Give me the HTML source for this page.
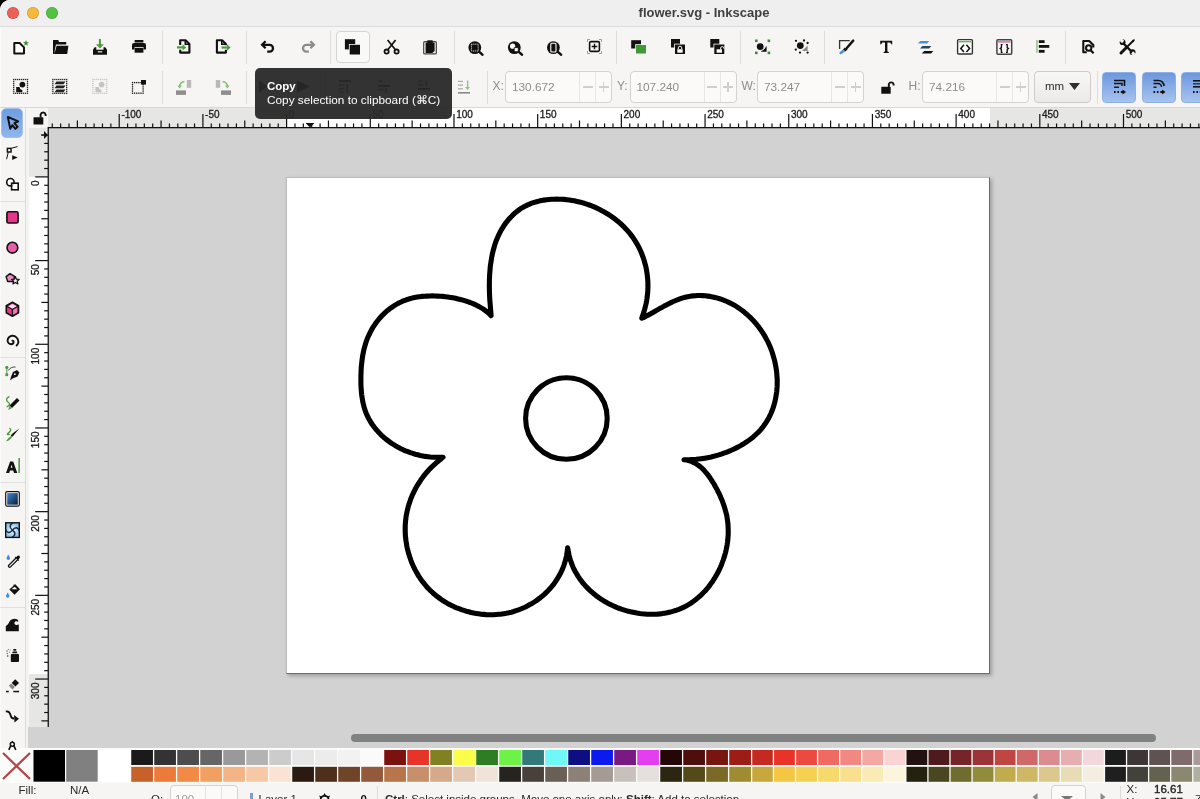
<!DOCTYPE html><html><head><meta charset="utf-8"><style>
*{box-sizing:border-box;margin:0;padding:0}
html,body{width:1200px;height:799px;overflow:hidden;background:#000}
body{font-family:"Liberation Sans",sans-serif;position:relative}
.a{position:absolute}
#win{will-change:transform;position:absolute;left:0;top:0;width:1200px;height:799px;background:#f6f5f4;border-radius:10px 0 0 0;overflow:hidden;box-shadow:inset 1px 1px 0 #fbfbfb}
#title{left:0;top:0;width:1200px;height:27px;background:#efefef;border-bottom:1px solid #dcdcdc}
.tl{width:12px;height:12px;border-radius:50%;top:7.2px;box-shadow:inset 0 0 0 .6px rgba(0,0,0,.18)}
.sep{background:#dedddb;width:1px}
.ic{position:absolute}
.inp{position:absolute;height:32px;border:1px solid #d3d2d0;border-radius:4px;background:#fbfaf9}
.inp span{position:absolute;left:6px;top:7.5px;font-size:11.8px;color:#8d8d8d}
.lbl{position:absolute;font-size:12px;color:#8d8d8d}
</style></head><body><div id="win">
<div class="a" id="title"></div>
<div class="a tl" style="left:7.2px;background:#ee5f57"></div>
<div class="a tl" style="left:26.6px;background:#f6b83b"></div>
<div class="a tl" style="left:45.6px;background:#55c142"></div>
<div class="a" style="left:0;top:5px;width:1408px;text-align:center;font-size:13px;font-weight:bold;color:#404040">flower.svg - Inkscape</div>
<div class="a sep" style="left:161.5px;top:31px;height:33px"></div>
<div class="a sep" style="left:245.5px;top:31px;height:33px"></div>
<div class="a sep" style="left:329.5px;top:31px;height:33px"></div>
<div class="a sep" style="left:453.5px;top:31px;height:33px"></div>
<div class="a sep" style="left:616px;top:31px;height:33px"></div>
<div class="a sep" style="left:740px;top:31px;height:33px"></div>
<div class="a sep" style="left:824px;top:31px;height:33px"></div>
<div class="a sep" style="left:1065px;top:31px;height:33px"></div>
<div class="a sep" style="left:161.5px;top:71px;height:33px"></div>
<div class="a sep" style="left:245.5px;top:71px;height:33px"></div>
<div class="a sep" style="left:487px;top:71px;height:33px"></div>
<div class="a sep" style="left:1096.5px;top:71px;height:33px"></div>
<div class="a" style="left:0;top:107px;width:1200px;height:1px;background:#d8d8d8"></div>
<div class="a" style="left:336px;top:31px;width:34px;height:32px;border:1px solid #d6d5d3;border-radius:4px;background:#f9f9f8"></div>
<div class="lbl" style="left:492.5px;top:79px">X:</div>
<div class="inp" style="left:505px;top:71px;width:107px"><span>130.672</span><div class="a" style="left:73px;top:0;width:1px;height:30px;background:#e6e5e3"></div><div class="a" style="left:89px;top:0;width:1px;height:30px;background:#e6e5e3"></div><div class="a" style="left:76.5px;top:14px;width:10px;height:1.5px;background:#cfcfcf"></div><div class="a" style="left:92.5px;top:14px;width:10px;height:1.5px;background:#cfcfcf"></div><div class="a" style="left:96.7px;top:9.5px;width:1.5px;height:10px;background:#cfcfcf"></div></div>
<div class="lbl" style="left:617px;top:79px">Y:</div>
<div class="inp" style="left:629.5px;top:71px;width:107px"><span>107.240</span><div class="a" style="left:73px;top:0;width:1px;height:30px;background:#e6e5e3"></div><div class="a" style="left:89px;top:0;width:1px;height:30px;background:#e6e5e3"></div><div class="a" style="left:76.5px;top:14px;width:10px;height:1.5px;background:#cfcfcf"></div><div class="a" style="left:92.5px;top:14px;width:10px;height:1.5px;background:#cfcfcf"></div><div class="a" style="left:96.7px;top:9.5px;width:1.5px;height:10px;background:#cfcfcf"></div></div>
<div class="lbl" style="left:741.5px;top:79px">W:</div>
<div class="inp" style="left:757px;top:71px;width:107px"><span>73.247</span><div class="a" style="left:73px;top:0;width:1px;height:30px;background:#e6e5e3"></div><div class="a" style="left:89px;top:0;width:1px;height:30px;background:#e6e5e3"></div><div class="a" style="left:76.5px;top:14px;width:10px;height:1.5px;background:#cfcfcf"></div><div class="a" style="left:92.5px;top:14px;width:10px;height:1.5px;background:#cfcfcf"></div><div class="a" style="left:96.7px;top:9.5px;width:1.5px;height:10px;background:#cfcfcf"></div></div>
<div class="lbl" style="left:908.5px;top:79px">H:</div>
<div class="inp" style="left:922px;top:71px;width:107px"><span>74.216</span><div class="a" style="left:73px;top:0;width:1px;height:30px;background:#e6e5e3"></div><div class="a" style="left:89px;top:0;width:1px;height:30px;background:#e6e5e3"></div><div class="a" style="left:76.5px;top:14px;width:10px;height:1.5px;background:#cfcfcf"></div><div class="a" style="left:92.5px;top:14px;width:10px;height:1.5px;background:#cfcfcf"></div><div class="a" style="left:96.7px;top:9.5px;width:1.5px;height:10px;background:#cfcfcf"></div></div>
<div class="a" style="left:1034px;top:71px;width:57px;height:32px;border:1px solid #cdccca;border-radius:4px;background:linear-gradient(#f7f7f6,#ebeae9)"></div>
<div class="a" style="left:1045px;top:80px;font-size:11.5px;color:#2e2e2e">mm</div>
<svg class="a" style="left:1069px;top:83px" width="11" height="7"><path d="M0 0H11L5.5 7Z" fill="#2e2e2e"/></svg>
<div class="a" style="left:1102px;top:71.5px;width:34px;height:31.5px;border-radius:4px;background:linear-gradient(#6c98de,#a8c3ee);border:1px solid #8fb0e4"></div>
<div class="a" style="left:1141.5px;top:71.5px;width:34px;height:31.5px;border-radius:4px;background:linear-gradient(#6c98de,#a8c3ee);border:1px solid #8fb0e4"></div>
<div class="a" style="left:1181px;top:71.5px;width:34px;height:31.5px;border-radius:4px;background:linear-gradient(#6c98de,#a8c3ee);border:1px solid #8fb0e4"></div>
<div class="a" style="left:25px;top:108px;width:1px;height:640px;background:#dcdcdc"></div>
<div class="a" style="left:1.2px;top:107.6px;width:22px;height:30px;border-radius:5px;background:linear-gradient(#6f9de3,#8fb5ec);border:1px solid #a6c0e8"></div>
<div class="a" style="left:0;top:200.5px;width:25px;height:1px;background:#e0e0e0"></div>
<div class="a" style="left:0;top:357px;width:25px;height:1px;background:#e0e0e0"></div>
<div class="a" style="left:0;top:482px;width:25px;height:1px;background:#e0e0e0"></div>
<div class="a" style="left:0;top:607px;width:25px;height:1px;background:#e0e0e0"></div>
<div class="a" style="left:27.5px;top:108px;width:1172.5px;height:640px;background:#d2d2d2"></div>
<div class="a" style="left:48px;top:108px;width:1152px;height:20px;background:#e6e6e5"></div>
<div class="a" style="left:287px;top:108px;width:703px;height:20px;background:#fff"></div>
<div class="a" style="left:28.5px;top:128px;width:20px;height:599px;background:#e6e6e5"></div>
<div class="a" style="left:28.5px;top:176.9px;width:20px;height:497.5px;background:#fff"></div>
<div class="a" style="left:26px;top:128px;width:2.5px;height:599px;background:#f3f3f2"></div>
<div class="a" style="left:26px;top:108px;width:22px;height:20px;background:#f6f5f4"></div>
<div class="a" style="left:26px;top:727px;width:2px;height:21px;background:#f3f3f2"></div>
<svg class="a" style="left:0;top:0;will-change:transform" width="1200" height="799"><rect x="48" y="127" width="1152" height="1.3" fill="#111"/><rect x="47.6" y="127" width="1.3" height="600" fill="#111"/><rect x="51.67" y="123.5" width="1.2" height="3.5" fill="#111"/><rect x="60.04" y="123.5" width="1.2" height="3.5" fill="#111"/><rect x="68.41" y="123.5" width="1.2" height="3.5" fill="#111"/><rect x="76.78" y="120.5" width="1.2" height="6.5" fill="#111"/><rect x="85.14" y="123.5" width="1.2" height="3.5" fill="#111"/><rect x="93.51" y="123.5" width="1.2" height="3.5" fill="#111"/><rect x="101.88" y="123.5" width="1.2" height="3.5" fill="#111"/><rect x="110.25" y="123.5" width="1.2" height="3.5" fill="#111"/><rect x="118.62" y="114" width="1.2" height="13" fill="#111"/><text x="121.42" y="118.4" font-size="10" fill="#1a1a1a" stroke="#1a1a1a" stroke-width=".3">-100</text><rect x="126.99" y="123.5" width="1.2" height="3.5" fill="#111"/><rect x="135.36" y="123.5" width="1.2" height="3.5" fill="#111"/><rect x="143.73" y="123.5" width="1.2" height="3.5" fill="#111"/><rect x="152.10" y="123.5" width="1.2" height="3.5" fill="#111"/><rect x="160.47" y="120.5" width="1.2" height="6.5" fill="#111"/><rect x="168.83" y="123.5" width="1.2" height="3.5" fill="#111"/><rect x="177.20" y="123.5" width="1.2" height="3.5" fill="#111"/><rect x="185.57" y="123.5" width="1.2" height="3.5" fill="#111"/><rect x="193.94" y="123.5" width="1.2" height="3.5" fill="#111"/><rect x="202.31" y="114" width="1.2" height="13" fill="#111"/><text x="205.11" y="118.4" font-size="10" fill="#1a1a1a" stroke="#1a1a1a" stroke-width=".3">-50</text><rect x="210.68" y="123.5" width="1.2" height="3.5" fill="#111"/><rect x="219.05" y="123.5" width="1.2" height="3.5" fill="#111"/><rect x="227.42" y="123.5" width="1.2" height="3.5" fill="#111"/><rect x="235.79" y="123.5" width="1.2" height="3.5" fill="#111"/><rect x="244.16" y="120.5" width="1.2" height="6.5" fill="#111"/><rect x="252.52" y="123.5" width="1.2" height="3.5" fill="#111"/><rect x="260.89" y="123.5" width="1.2" height="3.5" fill="#111"/><rect x="269.26" y="123.5" width="1.2" height="3.5" fill="#111"/><rect x="277.63" y="123.5" width="1.2" height="3.5" fill="#111"/><rect x="286.00" y="114" width="1.2" height="13" fill="#111"/><text x="288.80" y="118.4" font-size="10" fill="#1a1a1a" stroke="#1a1a1a" stroke-width=".3">0</text><rect x="294.37" y="123.5" width="1.2" height="3.5" fill="#111"/><rect x="302.74" y="123.5" width="1.2" height="3.5" fill="#111"/><rect x="311.11" y="123.5" width="1.2" height="3.5" fill="#111"/><rect x="319.48" y="123.5" width="1.2" height="3.5" fill="#111"/><rect x="327.85" y="120.5" width="1.2" height="6.5" fill="#111"/><rect x="336.21" y="123.5" width="1.2" height="3.5" fill="#111"/><rect x="344.58" y="123.5" width="1.2" height="3.5" fill="#111"/><rect x="352.95" y="123.5" width="1.2" height="3.5" fill="#111"/><rect x="361.32" y="123.5" width="1.2" height="3.5" fill="#111"/><rect x="369.69" y="114" width="1.2" height="13" fill="#111"/><text x="372.49" y="118.4" font-size="10" fill="#1a1a1a" stroke="#1a1a1a" stroke-width=".3">50</text><rect x="378.06" y="123.5" width="1.2" height="3.5" fill="#111"/><rect x="386.43" y="123.5" width="1.2" height="3.5" fill="#111"/><rect x="394.80" y="123.5" width="1.2" height="3.5" fill="#111"/><rect x="403.17" y="123.5" width="1.2" height="3.5" fill="#111"/><rect x="411.53" y="120.5" width="1.2" height="6.5" fill="#111"/><rect x="419.90" y="123.5" width="1.2" height="3.5" fill="#111"/><rect x="428.27" y="123.5" width="1.2" height="3.5" fill="#111"/><rect x="436.64" y="123.5" width="1.2" height="3.5" fill="#111"/><rect x="445.01" y="123.5" width="1.2" height="3.5" fill="#111"/><rect x="453.38" y="114" width="1.2" height="13" fill="#111"/><text x="456.18" y="118.4" font-size="10" fill="#1a1a1a" stroke="#1a1a1a" stroke-width=".3">100</text><rect x="461.75" y="123.5" width="1.2" height="3.5" fill="#111"/><rect x="470.12" y="123.5" width="1.2" height="3.5" fill="#111"/><rect x="478.49" y="123.5" width="1.2" height="3.5" fill="#111"/><rect x="486.86" y="123.5" width="1.2" height="3.5" fill="#111"/><rect x="495.23" y="120.5" width="1.2" height="6.5" fill="#111"/><rect x="503.59" y="123.5" width="1.2" height="3.5" fill="#111"/><rect x="511.96" y="123.5" width="1.2" height="3.5" fill="#111"/><rect x="520.33" y="123.5" width="1.2" height="3.5" fill="#111"/><rect x="528.70" y="123.5" width="1.2" height="3.5" fill="#111"/><rect x="537.07" y="114" width="1.2" height="13" fill="#111"/><text x="539.87" y="118.4" font-size="10" fill="#1a1a1a" stroke="#1a1a1a" stroke-width=".3">150</text><rect x="545.44" y="123.5" width="1.2" height="3.5" fill="#111"/><rect x="553.81" y="123.5" width="1.2" height="3.5" fill="#111"/><rect x="562.18" y="123.5" width="1.2" height="3.5" fill="#111"/><rect x="570.55" y="123.5" width="1.2" height="3.5" fill="#111"/><rect x="578.91" y="120.5" width="1.2" height="6.5" fill="#111"/><rect x="587.28" y="123.5" width="1.2" height="3.5" fill="#111"/><rect x="595.65" y="123.5" width="1.2" height="3.5" fill="#111"/><rect x="604.02" y="123.5" width="1.2" height="3.5" fill="#111"/><rect x="612.39" y="123.5" width="1.2" height="3.5" fill="#111"/><rect x="620.76" y="114" width="1.2" height="13" fill="#111"/><text x="623.56" y="118.4" font-size="10" fill="#1a1a1a" stroke="#1a1a1a" stroke-width=".3">200</text><rect x="629.13" y="123.5" width="1.2" height="3.5" fill="#111"/><rect x="637.50" y="123.5" width="1.2" height="3.5" fill="#111"/><rect x="645.87" y="123.5" width="1.2" height="3.5" fill="#111"/><rect x="654.24" y="123.5" width="1.2" height="3.5" fill="#111"/><rect x="662.61" y="120.5" width="1.2" height="6.5" fill="#111"/><rect x="670.97" y="123.5" width="1.2" height="3.5" fill="#111"/><rect x="679.34" y="123.5" width="1.2" height="3.5" fill="#111"/><rect x="687.71" y="123.5" width="1.2" height="3.5" fill="#111"/><rect x="696.08" y="123.5" width="1.2" height="3.5" fill="#111"/><rect x="704.45" y="114" width="1.2" height="13" fill="#111"/><text x="707.25" y="118.4" font-size="10" fill="#1a1a1a" stroke="#1a1a1a" stroke-width=".3">250</text><rect x="712.82" y="123.5" width="1.2" height="3.5" fill="#111"/><rect x="721.19" y="123.5" width="1.2" height="3.5" fill="#111"/><rect x="729.56" y="123.5" width="1.2" height="3.5" fill="#111"/><rect x="737.93" y="123.5" width="1.2" height="3.5" fill="#111"/><rect x="746.29" y="120.5" width="1.2" height="6.5" fill="#111"/><rect x="754.66" y="123.5" width="1.2" height="3.5" fill="#111"/><rect x="763.03" y="123.5" width="1.2" height="3.5" fill="#111"/><rect x="771.40" y="123.5" width="1.2" height="3.5" fill="#111"/><rect x="779.77" y="123.5" width="1.2" height="3.5" fill="#111"/><rect x="788.14" y="114" width="1.2" height="13" fill="#111"/><text x="790.94" y="118.4" font-size="10" fill="#1a1a1a" stroke="#1a1a1a" stroke-width=".3">300</text><rect x="796.51" y="123.5" width="1.2" height="3.5" fill="#111"/><rect x="804.88" y="123.5" width="1.2" height="3.5" fill="#111"/><rect x="813.25" y="123.5" width="1.2" height="3.5" fill="#111"/><rect x="821.62" y="123.5" width="1.2" height="3.5" fill="#111"/><rect x="829.99" y="120.5" width="1.2" height="6.5" fill="#111"/><rect x="838.35" y="123.5" width="1.2" height="3.5" fill="#111"/><rect x="846.72" y="123.5" width="1.2" height="3.5" fill="#111"/><rect x="855.09" y="123.5" width="1.2" height="3.5" fill="#111"/><rect x="863.46" y="123.5" width="1.2" height="3.5" fill="#111"/><rect x="871.83" y="114" width="1.2" height="13" fill="#111"/><text x="874.63" y="118.4" font-size="10" fill="#1a1a1a" stroke="#1a1a1a" stroke-width=".3">350</text><rect x="880.20" y="123.5" width="1.2" height="3.5" fill="#111"/><rect x="888.57" y="123.5" width="1.2" height="3.5" fill="#111"/><rect x="896.94" y="123.5" width="1.2" height="3.5" fill="#111"/><rect x="905.31" y="123.5" width="1.2" height="3.5" fill="#111"/><rect x="913.67" y="120.5" width="1.2" height="6.5" fill="#111"/><rect x="922.04" y="123.5" width="1.2" height="3.5" fill="#111"/><rect x="930.41" y="123.5" width="1.2" height="3.5" fill="#111"/><rect x="938.78" y="123.5" width="1.2" height="3.5" fill="#111"/><rect x="947.15" y="123.5" width="1.2" height="3.5" fill="#111"/><rect x="955.52" y="114" width="1.2" height="13" fill="#111"/><text x="958.32" y="118.4" font-size="10" fill="#1a1a1a" stroke="#1a1a1a" stroke-width=".3">400</text><rect x="963.89" y="123.5" width="1.2" height="3.5" fill="#111"/><rect x="972.26" y="123.5" width="1.2" height="3.5" fill="#111"/><rect x="980.63" y="123.5" width="1.2" height="3.5" fill="#111"/><rect x="989.00" y="123.5" width="1.2" height="3.5" fill="#111"/><rect x="997.37" y="120.5" width="1.2" height="6.5" fill="#111"/><rect x="1005.73" y="123.5" width="1.2" height="3.5" fill="#111"/><rect x="1014.10" y="123.5" width="1.2" height="3.5" fill="#111"/><rect x="1022.47" y="123.5" width="1.2" height="3.5" fill="#111"/><rect x="1030.84" y="123.5" width="1.2" height="3.5" fill="#111"/><rect x="1039.21" y="114" width="1.2" height="13" fill="#111"/><text x="1042.01" y="118.4" font-size="10" fill="#1a1a1a" stroke="#1a1a1a" stroke-width=".3">450</text><rect x="1047.58" y="123.5" width="1.2" height="3.5" fill="#111"/><rect x="1055.95" y="123.5" width="1.2" height="3.5" fill="#111"/><rect x="1064.32" y="123.5" width="1.2" height="3.5" fill="#111"/><rect x="1072.69" y="123.5" width="1.2" height="3.5" fill="#111"/><rect x="1081.06" y="120.5" width="1.2" height="6.5" fill="#111"/><rect x="1089.42" y="123.5" width="1.2" height="3.5" fill="#111"/><rect x="1097.79" y="123.5" width="1.2" height="3.5" fill="#111"/><rect x="1106.16" y="123.5" width="1.2" height="3.5" fill="#111"/><rect x="1114.53" y="123.5" width="1.2" height="3.5" fill="#111"/><rect x="1122.90" y="114" width="1.2" height="13" fill="#111"/><text x="1125.70" y="118.4" font-size="10" fill="#1a1a1a" stroke="#1a1a1a" stroke-width=".3">500</text><rect x="1131.27" y="123.5" width="1.2" height="3.5" fill="#111"/><rect x="1139.64" y="123.5" width="1.2" height="3.5" fill="#111"/><rect x="1148.01" y="123.5" width="1.2" height="3.5" fill="#111"/><rect x="1156.38" y="123.5" width="1.2" height="3.5" fill="#111"/><rect x="1164.75" y="120.5" width="1.2" height="6.5" fill="#111"/><rect x="1173.11" y="123.5" width="1.2" height="3.5" fill="#111"/><rect x="1181.48" y="123.5" width="1.2" height="3.5" fill="#111"/><rect x="1189.85" y="123.5" width="1.2" height="3.5" fill="#111"/><rect x="1198.22" y="123.5" width="1.2" height="3.5" fill="#111"/><rect x="41.4" y="134.46" width="6.600000000000001" height="1.2" fill="#111"/><rect x="44.2" y="142.82" width="3.799999999999997" height="1.2" fill="#111"/><rect x="44.2" y="151.19" width="3.799999999999997" height="1.2" fill="#111"/><rect x="44.2" y="159.56" width="3.799999999999997" height="1.2" fill="#111"/><rect x="44.2" y="167.93" width="3.799999999999997" height="1.2" fill="#111"/><rect x="35.2" y="176.30" width="12.799999999999997" height="1.2" fill="#111"/><text transform="translate(38.8 180.40) rotate(-90)" text-anchor="end" font-size="10" fill="#1a1a1a" stroke="#1a1a1a" stroke-width=".3">0</text><rect x="44.2" y="184.67" width="3.799999999999997" height="1.2" fill="#111"/><rect x="44.2" y="193.04" width="3.799999999999997" height="1.2" fill="#111"/><rect x="44.2" y="201.41" width="3.799999999999997" height="1.2" fill="#111"/><rect x="44.2" y="209.78" width="3.799999999999997" height="1.2" fill="#111"/><rect x="41.4" y="218.15" width="6.600000000000001" height="1.2" fill="#111"/><rect x="44.2" y="226.51" width="3.799999999999997" height="1.2" fill="#111"/><rect x="44.2" y="234.88" width="3.799999999999997" height="1.2" fill="#111"/><rect x="44.2" y="243.25" width="3.799999999999997" height="1.2" fill="#111"/><rect x="44.2" y="251.62" width="3.799999999999997" height="1.2" fill="#111"/><rect x="35.2" y="259.99" width="12.799999999999997" height="1.2" fill="#111"/><text transform="translate(38.8 264.09) rotate(-90)" text-anchor="end" font-size="10" fill="#1a1a1a" stroke="#1a1a1a" stroke-width=".3">50</text><rect x="44.2" y="268.36" width="3.799999999999997" height="1.2" fill="#111"/><rect x="44.2" y="276.73" width="3.799999999999997" height="1.2" fill="#111"/><rect x="44.2" y="285.10" width="3.799999999999997" height="1.2" fill="#111"/><rect x="44.2" y="293.47" width="3.799999999999997" height="1.2" fill="#111"/><rect x="41.4" y="301.83" width="6.600000000000001" height="1.2" fill="#111"/><rect x="44.2" y="310.20" width="3.799999999999997" height="1.2" fill="#111"/><rect x="44.2" y="318.57" width="3.799999999999997" height="1.2" fill="#111"/><rect x="44.2" y="326.94" width="3.799999999999997" height="1.2" fill="#111"/><rect x="44.2" y="335.31" width="3.799999999999997" height="1.2" fill="#111"/><rect x="35.2" y="343.68" width="12.799999999999997" height="1.2" fill="#111"/><text transform="translate(38.8 347.78) rotate(-90)" text-anchor="end" font-size="10" fill="#1a1a1a" stroke="#1a1a1a" stroke-width=".3">100</text><rect x="44.2" y="352.05" width="3.799999999999997" height="1.2" fill="#111"/><rect x="44.2" y="360.42" width="3.799999999999997" height="1.2" fill="#111"/><rect x="44.2" y="368.79" width="3.799999999999997" height="1.2" fill="#111"/><rect x="44.2" y="377.16" width="3.799999999999997" height="1.2" fill="#111"/><rect x="41.4" y="385.52" width="6.600000000000001" height="1.2" fill="#111"/><rect x="44.2" y="393.89" width="3.799999999999997" height="1.2" fill="#111"/><rect x="44.2" y="402.26" width="3.799999999999997" height="1.2" fill="#111"/><rect x="44.2" y="410.63" width="3.799999999999997" height="1.2" fill="#111"/><rect x="44.2" y="419.00" width="3.799999999999997" height="1.2" fill="#111"/><rect x="35.2" y="427.37" width="12.799999999999997" height="1.2" fill="#111"/><text transform="translate(38.8 431.47) rotate(-90)" text-anchor="end" font-size="10" fill="#1a1a1a" stroke="#1a1a1a" stroke-width=".3">150</text><rect x="44.2" y="435.74" width="3.799999999999997" height="1.2" fill="#111"/><rect x="44.2" y="444.11" width="3.799999999999997" height="1.2" fill="#111"/><rect x="44.2" y="452.48" width="3.799999999999997" height="1.2" fill="#111"/><rect x="44.2" y="460.85" width="3.799999999999997" height="1.2" fill="#111"/><rect x="41.4" y="469.21" width="6.600000000000001" height="1.2" fill="#111"/><rect x="44.2" y="477.58" width="3.799999999999997" height="1.2" fill="#111"/><rect x="44.2" y="485.95" width="3.799999999999997" height="1.2" fill="#111"/><rect x="44.2" y="494.32" width="3.799999999999997" height="1.2" fill="#111"/><rect x="44.2" y="502.69" width="3.799999999999997" height="1.2" fill="#111"/><rect x="35.2" y="511.06" width="12.799999999999997" height="1.2" fill="#111"/><text transform="translate(38.8 515.16) rotate(-90)" text-anchor="end" font-size="10" fill="#1a1a1a" stroke="#1a1a1a" stroke-width=".3">200</text><rect x="44.2" y="519.43" width="3.799999999999997" height="1.2" fill="#111"/><rect x="44.2" y="527.80" width="3.799999999999997" height="1.2" fill="#111"/><rect x="44.2" y="536.17" width="3.799999999999997" height="1.2" fill="#111"/><rect x="44.2" y="544.54" width="3.799999999999997" height="1.2" fill="#111"/><rect x="41.4" y="552.90" width="6.600000000000001" height="1.2" fill="#111"/><rect x="44.2" y="561.27" width="3.799999999999997" height="1.2" fill="#111"/><rect x="44.2" y="569.64" width="3.799999999999997" height="1.2" fill="#111"/><rect x="44.2" y="578.01" width="3.799999999999997" height="1.2" fill="#111"/><rect x="44.2" y="586.38" width="3.799999999999997" height="1.2" fill="#111"/><rect x="35.2" y="594.75" width="12.799999999999997" height="1.2" fill="#111"/><text transform="translate(38.8 598.85) rotate(-90)" text-anchor="end" font-size="10" fill="#1a1a1a" stroke="#1a1a1a" stroke-width=".3">250</text><rect x="44.2" y="603.12" width="3.799999999999997" height="1.2" fill="#111"/><rect x="44.2" y="611.49" width="3.799999999999997" height="1.2" fill="#111"/><rect x="44.2" y="619.86" width="3.799999999999997" height="1.2" fill="#111"/><rect x="44.2" y="628.23" width="3.799999999999997" height="1.2" fill="#111"/><rect x="41.4" y="636.59" width="6.600000000000001" height="1.2" fill="#111"/><rect x="44.2" y="644.96" width="3.799999999999997" height="1.2" fill="#111"/><rect x="44.2" y="653.33" width="3.799999999999997" height="1.2" fill="#111"/><rect x="44.2" y="661.70" width="3.799999999999997" height="1.2" fill="#111"/><rect x="44.2" y="670.07" width="3.799999999999997" height="1.2" fill="#111"/><rect x="35.2" y="678.44" width="12.799999999999997" height="1.2" fill="#111"/><text transform="translate(38.8 682.54) rotate(-90)" text-anchor="end" font-size="10" fill="#1a1a1a" stroke="#1a1a1a" stroke-width=".3">300</text><rect x="44.2" y="686.81" width="3.799999999999997" height="1.2" fill="#111"/><rect x="44.2" y="695.18" width="3.799999999999997" height="1.2" fill="#111"/><rect x="44.2" y="703.55" width="3.799999999999997" height="1.2" fill="#111"/><rect x="44.2" y="711.92" width="3.799999999999997" height="1.2" fill="#111"/><rect x="41.4" y="720.28" width="6.600000000000001" height="1.2" fill="#111"/><path d="M305.5 123H314.5L310 127.5Z" fill="#111"/><path d="M44 131L48 135L44 139Z M41 134.4H47V135.6H41Z" fill="#111"/></svg>
<div class="a" style="left:286px;top:177px;width:704px;height:497px;background:#fff;border-left:1px solid #bdbdbd;border-top:1px solid #bdbdbd;border-right:1.5px solid #6b6b6b;border-bottom:1.5px solid #6b6b6b;box-shadow:2px 2px 4px rgba(0,0,0,.25)"></div>
<svg class="a" style="left:0;top:0" width="1200" height="799"><path d="M491.1 315.7 L490.9 313.1 L490.7 310.7 L490.5 308.3 L490.3 305.9 L490.1 303.4 L489.9 301.0 L489.7 298.5 L489.6 295.9 L489.5 293.4 L489.4 290.9 L489.4 288.3 L489.3 285.7 L489.4 283.1 L489.4 280.5 L489.5 277.9 L489.6 275.3 L489.8 272.7 L490.0 270.1 L490.2 267.5 L490.5 264.9 L490.9 262.4 L491.3 259.8 L491.7 257.2 L492.2 254.7 L492.8 252.2 L493.4 249.7 L494.1 247.2 L494.8 244.8 L495.6 242.4 L496.5 240.0 L497.5 237.7 L498.5 235.3 L499.6 233.1 L500.8 230.8 L502.1 228.6 L503.4 226.5 L504.8 224.4 L506.3 222.4 L507.9 220.4 L509.5 218.5 L511.2 216.7 L513.0 214.9 L514.8 213.2 L516.7 211.6 L518.7 210.1 L520.7 208.7 L522.8 207.4 L525.0 206.2 L527.2 205.1 L529.5 204.1 L531.8 203.2 L534.2 202.4 L536.6 201.7 L539.0 201.1 L541.5 200.6 L544.0 200.1 L546.5 199.8 L549.0 199.5 L551.5 199.3 L554.1 199.2 L556.6 199.1 L559.2 199.2 L561.7 199.3 L564.3 199.4 L566.8 199.7 L569.4 200.0 L571.9 200.4 L574.4 200.8 L576.9 201.4 L579.4 202.0 L581.9 202.6 L584.4 203.3 L586.8 204.1 L589.3 205.0 L591.7 205.9 L594.1 206.9 L596.4 207.9 L598.7 209.0 L601.0 210.2 L603.3 211.4 L605.5 212.7 L607.7 214.0 L609.9 215.4 L612.0 216.8 L614.1 218.3 L616.1 219.9 L618.1 221.5 L620.0 223.1 L621.9 224.9 L623.7 226.6 L625.4 228.4 L627.2 230.3 L628.8 232.2 L630.4 234.1 L631.9 236.1 L633.4 238.2 L634.8 240.3 L636.1 242.4 L637.4 244.6 L638.6 246.8 L639.7 249.0 L640.7 251.3 L641.7 253.6 L642.6 256.0 L643.5 258.4 L644.2 260.8 L644.9 263.2 L645.6 265.6 L646.1 268.1 L646.6 270.6 L647.0 273.1 L647.3 275.6 L647.6 278.1 L647.8 280.7 L647.9 283.2 L647.9 285.7 L647.9 288.3 L647.8 290.8 L647.6 293.4 L647.3 295.9 L647.0 298.4 L646.6 301.0 L646.1 303.5 L645.5 306.0 L644.9 308.5 L644.2 310.9 L643.4 313.4 L642.5 315.8 L641.8 318.2 L644.1 317.3 L646.3 316.1 L648.5 314.9 L650.7 313.7 L652.9 312.5 L655.1 311.2 L657.4 309.9 L659.6 308.6 L661.9 307.4 L664.1 306.1 L666.4 304.9 L668.7 303.7 L671.0 302.6 L673.3 301.5 L675.7 300.5 L678.0 299.6 L680.4 298.7 L682.8 297.9 L685.2 297.3 L687.7 296.7 L690.2 296.2 L692.7 295.9 L695.2 295.7 L697.7 295.5 L700.2 295.5 L702.7 295.6 L705.2 295.8 L707.7 296.1 L710.2 296.4 L712.7 296.9 L715.2 297.5 L717.6 298.1 L720.0 298.8 L722.4 299.7 L724.7 300.6 L727.0 301.5 L729.3 302.6 L731.6 303.7 L733.8 304.9 L735.9 306.2 L738.1 307.6 L740.1 309.0 L742.2 310.5 L744.2 312.1 L746.1 313.7 L748.0 315.4 L749.9 317.1 L751.7 318.9 L753.5 320.8 L755.2 322.7 L756.8 324.6 L758.4 326.6 L759.9 328.7 L761.4 330.8 L762.8 332.9 L764.2 335.1 L765.5 337.4 L766.7 339.6 L767.9 341.9 L769.0 344.3 L770.0 346.6 L771.0 349.0 L771.9 351.5 L772.7 353.9 L773.4 356.4 L774.1 358.9 L774.8 361.4 L775.3 363.9 L775.8 366.4 L776.2 368.9 L776.6 371.5 L776.8 374.0 L777.0 376.6 L777.2 379.1 L777.2 381.7 L777.2 384.2 L777.1 386.7 L776.9 389.3 L776.7 391.8 L776.3 394.3 L775.9 396.7 L775.5 399.2 L774.9 401.6 L774.3 404.0 L773.6 406.4 L772.8 408.7 L771.9 411.0 L771.0 413.3 L770.0 415.5 L768.9 417.7 L767.7 419.9 L766.4 422.0 L765.0 424.0 L763.6 426.0 L762.1 428.0 L760.5 429.9 L758.8 431.7 L757.0 433.5 L755.2 435.2 L753.3 436.9 L751.3 438.5 L749.3 440.0 L747.2 441.5 L745.0 442.9 L742.8 444.3 L740.6 445.6 L738.3 446.9 L735.9 448.1 L733.6 449.2 L731.2 450.3 L728.7 451.3 L726.3 452.3 L723.8 453.2 L721.3 454.1 L718.8 454.9 L716.3 455.6 L713.7 456.3 L711.2 456.9 L708.7 457.4 L706.1 457.9 L703.6 458.4 L701.1 458.7 L698.6 459.0 L696.1 459.3 L693.7 459.5 L691.3 459.6 L688.9 459.7 L686.5 459.7 L684.0 459.8 L686.8 460.0 L689.3 460.7 L691.7 461.5 L693.9 462.6 L696.1 463.8 L698.1 465.1 L700.1 466.6 L701.9 468.2 L703.7 469.9 L705.3 471.8 L706.9 473.7 L708.5 475.7 L710.0 477.8 L711.4 479.9 L712.7 482.1 L714.1 484.2 L715.3 486.5 L716.6 488.7 L717.7 491.0 L718.9 493.2 L720.0 495.5 L721.0 497.9 L722.0 500.2 L722.9 502.6 L723.7 504.9 L724.5 507.3 L725.2 509.8 L725.9 512.2 L726.5 514.6 L727.0 517.1 L727.4 519.6 L727.7 522.1 L728.0 524.6 L728.1 527.1 L728.2 529.7 L728.2 532.2 L728.2 534.8 L728.0 537.3 L727.8 539.9 L727.5 542.4 L727.1 545.0 L726.6 547.5 L726.1 550.1 L725.5 552.6 L724.8 555.1 L724.0 557.6 L723.2 560.0 L722.3 562.5 L721.4 564.9 L720.4 567.3 L719.3 569.7 L718.1 572.0 L716.9 574.3 L715.6 576.5 L714.3 578.7 L712.9 580.9 L711.4 583.0 L709.9 585.1 L708.4 587.1 L706.7 589.1 L705.1 591.0 L703.3 592.8 L701.5 594.6 L699.7 596.3 L697.8 597.9 L695.9 599.5 L693.9 601.0 L691.9 602.5 L689.8 603.8 L687.7 605.1 L685.6 606.3 L683.4 607.4 L681.1 608.4 L678.9 609.3 L676.5 610.2 L674.2 610.9 L671.8 611.6 L669.4 612.2 L667.0 612.8 L664.6 613.2 L662.1 613.6 L659.6 613.9 L657.2 614.1 L654.6 614.2 L652.1 614.3 L649.6 614.3 L647.1 614.2 L644.6 614.0 L642.0 613.8 L639.5 613.5 L637.0 613.1 L634.5 612.6 L631.9 612.1 L629.5 611.5 L627.0 610.9 L624.5 610.1 L622.1 609.3 L619.6 608.5 L617.2 607.6 L614.9 606.6 L612.5 605.5 L610.2 604.4 L607.9 603.2 L605.7 602.0 L603.5 600.7 L601.3 599.3 L599.2 597.9 L597.1 596.4 L595.1 594.8 L593.2 593.2 L591.2 591.6 L589.4 589.9 L587.6 588.1 L585.8 586.3 L584.1 584.4 L582.5 582.5 L581.0 580.5 L579.5 578.4 L578.1 576.3 L576.8 574.2 L575.5 572.0 L574.3 569.8 L573.2 567.5 L572.2 565.1 L571.3 562.8 L570.5 560.3 L569.8 557.9 L569.1 555.3 L568.6 552.8 L568.1 550.2 L567.6 547.8 L567.4 550.1 L567.0 552.8 L566.6 555.4 L566.1 557.9 L565.4 560.4 L564.7 562.9 L563.9 565.3 L563.0 567.7 L562.0 570.1 L560.9 572.4 L559.8 574.6 L558.5 576.8 L557.2 579.0 L555.8 581.1 L554.4 583.2 L552.9 585.2 L551.3 587.1 L549.6 589.0 L547.9 590.9 L546.1 592.6 L544.3 594.4 L542.4 596.0 L540.4 597.6 L538.4 599.1 L536.4 600.6 L534.3 602.0 L532.1 603.4 L529.9 604.6 L527.7 605.8 L525.5 607.0 L523.2 608.0 L520.8 609.0 L518.5 609.9 L516.1 610.7 L513.7 611.5 L511.3 612.2 L508.8 612.8 L506.3 613.3 L503.9 613.7 L501.4 614.1 L498.9 614.3 L496.3 614.5 L493.8 614.7 L491.3 614.7 L488.7 614.7 L486.2 614.6 L483.7 614.4 L481.1 614.2 L478.6 613.8 L476.1 613.4 L473.6 613.0 L471.1 612.4 L468.7 611.8 L466.2 611.2 L463.8 610.4 L461.4 609.6 L459.0 608.7 L456.6 607.8 L454.3 606.8 L452.0 605.7 L449.8 604.6 L447.5 603.4 L445.4 602.1 L443.2 600.8 L441.1 599.4 L439.1 597.9 L437.1 596.4 L435.1 594.8 L433.2 593.2 L431.4 591.5 L429.6 589.8 L427.8 588.0 L426.2 586.1 L424.6 584.2 L423.0 582.2 L421.5 580.2 L420.1 578.2 L418.7 576.1 L417.4 573.9 L416.2 571.8 L415.0 569.6 L413.9 567.3 L412.8 565.0 L411.8 562.7 L410.9 560.4 L410.1 558.0 L409.3 555.6 L408.6 553.2 L407.9 550.8 L407.3 548.3 L406.8 545.9 L406.4 543.4 L406.0 540.9 L405.7 538.4 L405.4 535.9 L405.3 533.4 L405.2 530.9 L405.2 528.4 L405.2 525.8 L405.4 523.3 L405.6 520.8 L405.9 518.3 L406.2 515.8 L406.7 513.3 L407.2 510.9 L407.8 508.4 L408.4 506.0 L409.2 503.6 L410.0 501.2 L410.8 498.8 L411.8 496.4 L412.8 494.1 L413.9 491.8 L415.0 489.6 L416.2 487.3 L417.5 485.1 L418.9 483.0 L420.3 480.8 L421.7 478.7 L423.2 476.7 L424.8 474.7 L426.4 472.7 L428.1 470.8 L429.8 468.9 L431.6 467.1 L433.5 465.3 L435.4 463.6 L437.3 461.9 L439.3 460.3 L441.3 458.7 L443.0 457.2 L440.6 457.2 L438.0 457.3 L435.5 457.2 L432.9 457.2 L430.4 457.0 L427.8 456.7 L425.3 456.4 L422.8 455.9 L420.2 455.4 L417.7 454.8 L415.3 454.2 L412.8 453.4 L410.3 452.6 L407.9 451.7 L405.5 450.8 L403.2 449.8 L400.9 448.7 L398.6 447.5 L396.4 446.3 L394.2 444.9 L392.0 443.6 L389.9 442.1 L387.9 440.6 L385.9 439.1 L384.0 437.5 L382.1 435.8 L380.3 434.1 L378.6 432.3 L376.9 430.4 L375.3 428.5 L373.8 426.6 L372.3 424.5 L371.0 422.5 L369.7 420.4 L368.5 418.2 L367.4 416.0 L366.4 413.7 L365.5 411.4 L364.7 409.1 L364.0 406.7 L363.4 404.3 L362.8 401.9 L362.4 399.4 L362.0 396.9 L361.6 394.3 L361.4 391.8 L361.2 389.2 L361.0 386.6 L360.9 384.0 L360.9 381.4 L360.9 378.8 L360.9 376.2 L361.0 373.6 L361.1 371.0 L361.2 368.4 L361.4 365.8 L361.7 363.2 L362.0 360.6 L362.3 358.1 L362.7 355.5 L363.2 353.0 L363.7 350.5 L364.3 348.1 L365.0 345.6 L365.7 343.2 L366.5 340.8 L367.4 338.4 L368.4 336.1 L369.5 333.8 L370.6 331.6 L371.8 329.3 L373.1 327.2 L374.5 325.1 L375.9 323.0 L377.4 321.0 L379.0 319.0 L380.6 317.2 L382.3 315.3 L384.1 313.6 L385.9 311.9 L387.8 310.3 L389.8 308.7 L391.8 307.3 L393.9 305.9 L396.0 304.6 L398.1 303.4 L400.4 302.3 L402.6 301.2 L404.9 300.3 L407.3 299.5 L409.7 298.8 L412.1 298.1 L414.6 297.6 L417.1 297.1 L419.6 296.7 L422.1 296.4 L424.7 296.2 L427.3 296.1 L429.9 296.0 L432.4 295.9 L435.0 296.0 L437.6 296.1 L440.2 296.2 L442.8 296.4 L445.4 296.7 L447.9 297.0 L450.5 297.4 L453.0 297.8 L455.5 298.3 L458.0 298.9 L460.5 299.5 L462.9 300.1 L465.4 300.9 L467.7 301.7 L470.1 302.5 L472.4 303.4 L474.7 304.4 L476.9 305.5 L479.1 306.6 L481.3 307.9 L483.4 309.2 L485.4 310.6 L487.4 312.1 L489.3 313.7 L491.1 315.7Z" fill="none" stroke="#000" stroke-width="5.1" stroke-linejoin="round"/><circle cx="566.4" cy="418.5" r="40.8" fill="none" stroke="#000" stroke-width="5.1"/></svg>
<div class="a" style="left:351px;top:734px;width:805px;height:7.5px;border-radius:4px;background:#808282"></div>
<div class="a" style="left:0;top:748px;width:1200px;height:51px;background:#f6f5f4"></div>
<div class="a" style="left:0;top:748px;width:1200px;height:35px;background:#fbfbfa"></div>
<svg class="a" style="left:0;top:0;will-change:transform" width="1200" height="799"><rect x="131.25" y="750" width="21.70" height="15" fill="#1a1a1a"/><rect x="131.25" y="766.8" width="21.70" height="15" fill="#c8602a"/><rect x="154.25" y="750" width="21.70" height="15" fill="#333333"/><rect x="154.25" y="766.8" width="21.70" height="15" fill="#ee7a3a"/><rect x="177.25" y="750" width="21.70" height="15" fill="#4d4d4d"/><rect x="177.25" y="766.8" width="21.70" height="15" fill="#f08a45"/><rect x="200.25" y="750" width="21.70" height="15" fill="#666666"/><rect x="200.25" y="766.8" width="21.70" height="15" fill="#f2a061"/><rect x="223.25" y="750" width="21.70" height="15" fill="#999999"/><rect x="223.25" y="766.8" width="21.70" height="15" fill="#f4b486"/><rect x="246.25" y="750" width="21.70" height="15" fill="#b3b3b3"/><rect x="246.25" y="766.8" width="21.70" height="15" fill="#f6c8a6"/><rect x="269.25" y="750" width="21.70" height="15" fill="#cccccc"/><rect x="269.25" y="766.8" width="21.70" height="15" fill="#fae3d3"/><rect x="292.25" y="750" width="21.70" height="15" fill="#e6e6e6"/><rect x="292.25" y="766.8" width="21.70" height="15" fill="#2a1a10"/><rect x="315.25" y="750" width="21.70" height="15" fill="#ececec"/><rect x="315.25" y="766.8" width="21.70" height="15" fill="#4e2f1a"/><rect x="338.25" y="750" width="21.70" height="15" fill="#f2f2f2"/><rect x="338.25" y="766.8" width="21.70" height="15" fill="#6f4428"/><rect x="361.25" y="750" width="21.70" height="15" fill="#fafafa"/><rect x="361.25" y="766.8" width="21.70" height="15" fill="#93593a"/><rect x="384.25" y="750" width="21.70" height="15" fill="#7b120f"/><rect x="384.25" y="766.8" width="21.70" height="15" fill="#b8754a"/><rect x="407.25" y="750" width="21.70" height="15" fill="#e83428"/><rect x="407.25" y="766.8" width="21.70" height="15" fill="#c8906a"/><rect x="430.25" y="750" width="21.70" height="15" fill="#818123"/><rect x="430.25" y="766.8" width="21.70" height="15" fill="#d5a98a"/><rect x="453.25" y="750" width="21.70" height="15" fill="#fcfc4a"/><rect x="453.25" y="766.8" width="21.70" height="15" fill="#e3c8b3"/><rect x="476.25" y="750" width="21.70" height="15" fill="#2e7d23"/><rect x="476.25" y="766.8" width="21.70" height="15" fill="#f0e3da"/><rect x="499.25" y="750" width="21.70" height="15" fill="#6df248"/><rect x="499.25" y="766.8" width="21.70" height="15" fill="#262320"/><rect x="522.25" y="750" width="21.70" height="15" fill="#327a7a"/><rect x="522.25" y="766.8" width="21.70" height="15" fill="#48413b"/><rect x="545.25" y="750" width="21.70" height="15" fill="#70f8f8"/><rect x="545.25" y="766.8" width="21.70" height="15" fill="#6a5f57"/><rect x="568.25" y="750" width="21.70" height="15" fill="#0b0f82"/><rect x="568.25" y="766.8" width="21.70" height="15" fill="#8d8077"/><rect x="591.25" y="750" width="21.70" height="15" fill="#0c1af0"/><rect x="591.25" y="766.8" width="21.70" height="15" fill="#a69b94"/><rect x="614.25" y="750" width="21.70" height="15" fill="#791a84"/><rect x="614.25" y="766.8" width="21.70" height="15" fill="#c8c0ba"/><rect x="637.25" y="750" width="21.70" height="15" fill="#e53ef0"/><rect x="637.25" y="766.8" width="21.70" height="15" fill="#e3e0dd"/><rect x="660.25" y="750" width="21.70" height="15" fill="#250606"/><rect x="660.25" y="766.8" width="21.70" height="15" fill="#2a2610"/><rect x="683.25" y="750" width="21.70" height="15" fill="#4f0e0e"/><rect x="683.25" y="766.8" width="21.70" height="15" fill="#544918"/><rect x="706.25" y="750" width="21.70" height="15" fill="#77150f"/><rect x="706.25" y="766.8" width="21.70" height="15" fill="#7a6a25"/><rect x="729.25" y="750" width="21.70" height="15" fill="#9d1c15"/><rect x="729.25" y="766.8" width="21.70" height="15" fill="#9f8b32"/><rect x="752.25" y="750" width="20.52" height="15" fill="#c52a20"/><rect x="752.25" y="766.8" width="20.52" height="15" fill="#c8a83c"/><rect x="774.07" y="750" width="20.77" height="15" fill="#e83428"/><rect x="774.07" y="766.8" width="20.77" height="15" fill="#f5c544"/><rect x="796.14" y="750" width="20.77" height="15" fill="#ec4a40"/><rect x="796.14" y="766.8" width="20.77" height="15" fill="#f6d050"/><rect x="818.21" y="750" width="20.77" height="15" fill="#ef6a60"/><rect x="818.21" y="766.8" width="20.77" height="15" fill="#f7d86a"/><rect x="840.28" y="750" width="20.77" height="15" fill="#f28882"/><rect x="840.28" y="766.8" width="20.77" height="15" fill="#f8e08e"/><rect x="862.35" y="750" width="20.77" height="15" fill="#f4a8a4"/><rect x="862.35" y="766.8" width="20.77" height="15" fill="#faeab5"/><rect x="884.42" y="750" width="20.77" height="15" fill="#f9d4d3"/><rect x="884.42" y="766.8" width="20.77" height="15" fill="#fdf4dc"/><rect x="906.49" y="750" width="20.77" height="15" fill="#221111"/><rect x="906.49" y="766.8" width="20.77" height="15" fill="#24220f"/><rect x="928.56" y="750" width="20.77" height="15" fill="#4e1a1d"/><rect x="928.56" y="766.8" width="20.77" height="15" fill="#4a4620"/><rect x="950.63" y="750" width="20.77" height="15" fill="#75242a"/><rect x="950.63" y="766.8" width="20.77" height="15" fill="#706b2f"/><rect x="972.70" y="750" width="20.77" height="15" fill="#9a3436"/><rect x="972.70" y="766.8" width="20.77" height="15" fill="#928b3c"/><rect x="994.77" y="750" width="20.77" height="15" fill="#c04642"/><rect x="994.77" y="766.8" width="20.77" height="15" fill="#c0ac4c"/><rect x="1016.84" y="750" width="20.77" height="15" fill="#d06868"/><rect x="1016.84" y="766.8" width="20.77" height="15" fill="#ceb866"/><rect x="1038.91" y="750" width="20.77" height="15" fill="#dc8c90"/><rect x="1038.91" y="766.8" width="20.77" height="15" fill="#dcc78c"/><rect x="1060.98" y="750" width="20.77" height="15" fill="#e6aeb0"/><rect x="1060.98" y="766.8" width="20.77" height="15" fill="#e8dcb4"/><rect x="1083.05" y="750" width="20.77" height="15" fill="#f2d8dc"/><rect x="1083.05" y="766.8" width="20.77" height="15" fill="#f4eee0"/><rect x="1105.12" y="750" width="20.77" height="15" fill="#1c1c1c"/><rect x="1105.12" y="766.8" width="20.77" height="15" fill="#1f1f1f"/><rect x="1127.19" y="750" width="20.77" height="15" fill="#3e3536"/><rect x="1127.19" y="766.8" width="20.77" height="15" fill="#42423a"/><rect x="1149.26" y="750" width="20.77" height="15" fill="#5f5253"/><rect x="1149.26" y="766.8" width="20.77" height="15" fill="#63624f"/><rect x="1171.33" y="750" width="20.77" height="15" fill="#7f6b6c"/><rect x="1171.33" y="766.8" width="20.77" height="15" fill="#8a8970"/><rect x="1193.40" y="750" width="20.70" height="15" fill="#a89a9a"/><rect x="1193.40" y="766.8" width="20.70" height="15" fill="#b0b0a0"/><rect x="33.5" y="750" width="31.5" height="31.7" fill="#000"/><rect x="66.2" y="750" width="31.5" height="31.7" fill="#808080"/><rect x="99" y="750" width="30.5" height="31.7" fill="#fff"/><path d="M3 753L30 779M30 753L3 779" stroke="#b5454a" stroke-width="2.4"/></svg>
<div class="a" style="left:18.5px;top:784px;font-size:11.5px;color:#2a2a2a">Fill:</div>
<div class="a" style="left:70px;top:784px;font-size:11.5px;color:#2a2a2a">N/A</div>
<div class="a" style="left:151px;top:792.5px;font-size:11.5px;color:#2a2a2a">O:</div>
<div class="a" style="left:169.5px;top:784.5px;width:68px;height:30px;border:1px solid #d3d2d0;border-radius:4px;background:#fbfaf9"></div>
<div class="a" style="left:175px;top:792.5px;font-size:11.5px;color:#9a9a9a">100</div>
<div class="a" style="left:204.5px;top:785px;width:1px;height:14px;background:#e3e2e0"></div>
<div class="a" style="left:221px;top:785px;width:1px;height:14px;background:#e3e2e0"></div>
<div class="a" style="left:250.2px;top:792.5px;width:2.8px;height:7px;background:#7b9fd0"></div>
<div class="a" style="left:258.5px;top:792.5px;font-size:11.5px;color:#2a2a2a">Layer 1</div>
<div class="a" style="left:360.5px;top:792.5px;font-size:11.5px;font-weight:bold;color:#111">0</div>
<div class="a" style="left:377px;top:786px;width:1px;height:13px;background:#dcdcdc"></div>
<div class="a" style="left:385px;top:792.5px;font-size:11.5px;color:#2a2a2a;white-space:nowrap"><b>Ctrl</b>: Select inside groups. Move one axis only; <b>Shift</b>: Add to selection.</div>
<div class="a" style="left:1051px;top:784.5px;width:34.5px;height:30px;border:1px solid #d3d2d0;border-radius:4px;background:#fbfaf9"></div>
<svg class="a" style="left:1061px;top:796px" width="12" height="5"><path d="M0 0H12L6 5Z" fill="#777"/></svg>
<div class="a" style="left:1126.5px;top:783px;font-size:11.5px;color:#2a2a2a">X:</div>
<div class="a" style="left:1154px;top:783px;font-size:11.5px;color:#222;-webkit-text-stroke:.35px #222">16.61</div>
<div class="a" style="left:1126.5px;top:796px;font-size:11.5px;color:#2a2a2a">Y:</div>
<div class="a" style="left:1154px;top:796px;font-size:11.5px;color:#222;-webkit-text-stroke:.35px #222">95.77</div>
<div class="a" style="left:1195px;top:792.5px;font-size:11.5px;color:#2a2a2a">Z</div>
<svg class="a" style="left:0;top:0" width="1200" height="799"><path d="M14.3 43H19.6L24 47.4V53.5H14.3Z" fill="#fff" stroke="#111" stroke-width="2" stroke-linejoin="round"/><path d="M19.2 42.5V48H24.3" fill="none" stroke="#111" stroke-width="0"/><path d="M26 40L26.8 42.1L29 42.2L27.3 43.6L27.9 45.7L26 44.5L24.1 45.7L24.7 43.6L23 42.2L25.2 42.1Z" fill="#3f8f38"/><path d="M53 40H58.3L59 42H66.2V44.6H56L54.7 50.5V54H53Z" fill="#111"/><path d="M56.6 45.8H68.4L67.2 54H54.4Z" fill="#111"/><rect x="98.9" y="39" width="2" height="6.5" fill="#4b9a3c"/><path d="M95.9 44.3H103.9L99.9 48.4Z" fill="#4b9a3c"/><path d="M93 49.8L94.6 47.3H96.3V49.8H103.5V47.3H105.3L107 49.8V54.7H93Z" fill="#111"/><rect x="97.8" y="51.2" width="4.4" height="1.2" fill="#eee"/><rect x="134.6" y="40" width="8.8" height="2.4" rx=".5" fill="#111"/><path d="M132 45A2 2 0 0 1 134 43H144A2 2 0 0 1 146 45V49.5H143.5V47H134.5V49.5H132Z" fill="#111"/><rect x="134.6" y="47.8" width="8.8" height="4.9" fill="#111"/><path d="M180.2 45V40.2H185.6L189.4 44V52.6H180.2V49.8" fill="none" stroke="#111" stroke-width="2.1" stroke-linejoin="round"/><path d="M185.3 40.2V44.2H189.4" fill="none" stroke="#111" stroke-width="1.6"/><path d="M177 47.4H183.5" stroke="#4b9a3c" stroke-width="2.2"/><path d="M182.6 44.2L186.2 47.4L182.6 50.6Z" fill="#4b9a3c"/><path d="M225.9 45.3V44L222.1 40.2H216.9V52.6H225.9V49.8" fill="none" stroke="#111" stroke-width="2.1" stroke-linejoin="round"/><path d="M221.8 40.2V44.2H225.9" fill="none" stroke="#111" stroke-width="1.6"/><path d="M221.5 47.5H227.5" stroke="#4b9a3c" stroke-width="2.2"/><path d="M227 44.3L230.7 47.5L227 50.7Z" fill="#4b9a3c"/><path d="M263 44.8H269.6A3.4 3.4 0 0 1 269.6 51.6H267.2" fill="none" stroke="#111" stroke-width="2.3"/><path d="M265.6 41.3L262.1 44.8L265.6 48.3" fill="none" stroke="#111" stroke-width="2.3" stroke-linejoin="miter"/><path d="M313 44.8H306.4A3.4 3.4 0 0 0 306.4 51.6H308.8" fill="none" stroke="#8c8c8c" stroke-width="2.3"/><path d="M310.4 41.3L313.9 44.8L310.4 48.3" fill="none" stroke="#8c8c8c" stroke-width="2.3"/><rect x="344.9" y="39.2" width="10.3" height="10.2" fill="#111"/><rect x="348.9" y="44" width="11.9" height="11.3" fill="#f9f9f8"/><rect x="349.7" y="44.8" width="10.3" height="9.7" fill="#111"/><circle cx="386.6" cy="51.6" r="2.1" fill="none" stroke="#111" stroke-width="1.8"/><circle cx="396.6" cy="51.6" r="2.1" fill="none" stroke="#111" stroke-width="1.8"/><path d="M387.8 49.8L395.6 40M395.4 49.8L387.6 40" stroke="#111" stroke-width="1.7"/><rect x="423.7" y="41.6" width="12.6" height="12.3" rx="1" fill="none" stroke="#444" stroke-width="1.2"/><path d="M425.6 42.4H434.6V51L432.4 53H425.6Z" fill="#111"/><rect x="427.3" y="40.3" width="5.4" height="2.6" fill="#111"/><circle cx="474.8" cy="47.6" r="6.4" fill="#111"/><path d="M479.0 51.6L482.40000000000003 54.6" stroke="#111" stroke-width="2.6" stroke-linecap="round"/><rect x="471.4" y="44.2" width="6.8" height="6.8" fill="none" stroke="#fff" stroke-width="1" stroke-dasharray="1 1"/><circle cx="514.3" cy="47.6" r="6.4" fill="#111"/><path d="M518.5 51.6L521.9 54.6" stroke="#111" stroke-width="2.6" stroke-linecap="round"/><circle cx="512.6" cy="46.2" r="2.6" fill="#fff"/><rect x="514.2" y="47.7" width="4" height="4" fill="#fff" stroke="#111" stroke-width=".8"/><circle cx="553.4" cy="47.6" r="6.4" fill="#111"/><path d="M557.6 51.6L561.0 54.6" stroke="#111" stroke-width="2.6" stroke-linecap="round"/><rect x="550.8" y="43.2" width="5.2" height="8.8" rx="1" fill="none" stroke="#fff" stroke-width="1.1"/><path d="M587.5 42V39.5H590M599 39.5H601.5V42M601.5 51V53.5H599M590 53.5H587.5V51" fill="none" stroke="#999" stroke-width="1"/><rect x="589.6" y="41.6" width="9.8" height="9.8" rx="1.3" fill="none" stroke="#111" stroke-width="1.6"/><path d="M594.5 43.7V49.3M591.7 46.5H597.3" stroke="#111" stroke-width="1.4"/><rect x="631.2" y="40.2" width="9.8" height="8.3" fill="#111"/><rect x="635.2" y="44.2" width="11.6" height="10.1" fill="#f6f5f4"/><rect x="636" y="45" width="10" height="8.5" fill="#3f9a33"/><rect x="671" y="39" width="9" height="8.5" fill="#111"/><rect x="674.2" y="43.7" width="11.6" height="11" fill="#f6f5f4"/><rect x="675" y="44.5" width="10" height="9.5" fill="#111"/><rect x="677.3" y="49.3" width="5.4" height="3.4" fill="#fff"/><path d="M678.3 49.3V47.9A1.7 1.7 0 0 1 681.7 47.9V49.3" fill="none" stroke="#fff" stroke-width="1"/><rect x="710.3" y="39" width="9" height="8.5" fill="#111"/><rect x="713.5" y="43.7" width="11.6" height="11" fill="#f6f5f4"/><rect x="714.3" y="44.5" width="10" height="9.5" fill="#111"/><rect x="716.5999999999999" y="49.3" width="5.4" height="3.4" fill="#fff"/><path d="M720.5999999999999 49.3V47.9A1.7 1.7 0 0 1 723.9 47.9V48.6" fill="none" stroke="#fff" stroke-width="1"/><rect x="755" y="39.5" width="2.6" height="2.6" fill="#3f8a36"/><rect x="767.6" y="39.5" width="2.6" height="2.6" fill="#3f8a36"/><rect x="755" y="51.6" width="2.6" height="2.6" fill="#3f8a36"/><rect x="767.6" y="51.6" width="2.6" height="2.6" fill="#3f8a36"/><circle cx="760.2" cy="46.6" r="3.4" fill="#111"/><path d="M760.8 51.8L766.6 46V51.8Z" fill="#111"/><path d="M762.5 50.5L765.5 47.5" stroke="#f6f5f4" stroke-width=".8"/><circle cx="796" cy="40.8" r="1.15" fill="#111"/><circle cx="804" cy="40.5" r="1.15" fill="#111"/><circle cx="807.6" cy="43" r="1.15" fill="#111"/><circle cx="795.8" cy="49.6" r="1.15" fill="#111"/><circle cx="800" cy="52.6" r="1.15" fill="#111"/><circle cx="807.6" cy="52.6" r="1.15" fill="#111"/><circle cx="800.3" cy="45.6" r="3.4" fill="#111"/><path d="M802 51L807.6 45.4V51Z" fill="#8a8a8a"/><path d="M839.6 49V40.6H849.8" fill="none" stroke="#333" stroke-width="1.3"/><path d="M853.2 40.6L846.8 48" stroke="#111" stroke-width="2.4" stroke-linecap="round"/><path d="M844.8 47.4L847.6 49.6L845.4 51.6L843 49.4Z" fill="#111"/><path d="M842.8 49.6L845.2 51.6L840.6 54.4L839 53Z" fill="#4a90d9"/><path d="M880.2 40.8H892.2V44.3H891.1L890.3 42.6H887.4V51.6L888.8 52V53H883.6V52L885 51.6V42.6H882.1L881.3 44.3H880.2Z" fill="#111"/><path d="M920.2 41H929.4L927 43.5H918Z" fill="#4a8fd8"/><path d="M922.4 46H931.4L929 48.6H920Z" fill="#24466a"/><path d="M924.2 51H933.4L931 53.6H921.8Z" fill="#111"/><rect x="957.6" y="39.6" width="14.8" height="14.4" rx="1" fill="#fff" stroke="#333" stroke-width="1.4"/><rect x="958.6" y="41" width="12.8" height="1.4" fill="#6db35a"/><path d="M964 44.8L960.8 48.4L964 52M966.4 44.8L969.6 48.4L966.4 52" fill="none" stroke="#111" stroke-width="1.5"/><rect x="996.9" y="39.8" width="14.8" height="14.4" rx="1" fill="#f9f4f6" stroke="#444" stroke-width="1.5"/><rect x="997.9" y="41.2" width="12.8" height="1.4" fill="#d46aa0"/><path d="M1002.6 44.6H1001.4V47.6L1000.2 48.5L1001.4 49.4V52.4H1002.6M1006 44.6H1007.2V47.6L1008.4 48.5L1007.2 49.4V52.4H1006" fill="none" stroke="#111" stroke-width="1.3"/><rect x="1036.3" y="40" width="1.3" height="12.7" fill="#7cbf6a"/><rect x="1038.8" y="40.2" width="5.8" height="2.8" fill="#111"/><rect x="1038.8" y="45" width="10.5" height="2.8" fill="#111"/><rect x="1038.8" y="49.9" width="5.8" height="2.8" fill="#111"/><path d="M1086.8 52.3H1083.3V41H1089.2L1093.3 45.1V47.5" fill="none" stroke="#111" stroke-width="2.1" stroke-linejoin="round"/><circle cx="1088.7" cy="48" r="2.7" fill="none" stroke="#111" stroke-width="2"/><path d="M1090.4 50L1093.6 53.2" stroke="#111" stroke-width="2.2"/><path d="M1123.5 43.5L1132 52" stroke="#111" stroke-width="2.4"/><path d="M1121 53L1126.2 47.8" stroke="#111" stroke-width="3" stroke-linecap="round"/><path d="M1126 48L1133.5 40.5" stroke="#111" stroke-width="1.8" stroke-linecap="round"/><path d="M1131.8 40.3L1134.8 39.3L1133.8 42.3Z" fill="#111"/><circle cx="1122.6" cy="42.2" r="2.9" fill="#111"/><circle cx="1132.6" cy="52.2" r="2.9" fill="#111"/><path d="M1119.6 41L1122.2 43.2L1124.2 40.4L1121.5 38.6Z" fill="#f6f5f4"/><path d="M1135.6 53.4L1133 51.2L1131 54L1133.7 55.8Z" fill="#f6f5f4"/><rect x="13.05" y="78.85" width="1.3" height="1.3" fill="#222"/><rect x="13.05" y="92.65" width="1.3" height="1.3" fill="#222"/><rect x="15.02" y="78.85" width="1.3" height="1.3" fill="#222"/><rect x="15.02" y="92.65" width="1.3" height="1.3" fill="#222"/><rect x="16.99" y="78.85" width="1.3" height="1.3" fill="#222"/><rect x="16.99" y="92.65" width="1.3" height="1.3" fill="#222"/><rect x="18.96" y="78.85" width="1.3" height="1.3" fill="#222"/><rect x="18.96" y="92.65" width="1.3" height="1.3" fill="#222"/><rect x="20.94" y="78.85" width="1.3" height="1.3" fill="#222"/><rect x="20.94" y="92.65" width="1.3" height="1.3" fill="#222"/><rect x="22.91" y="78.85" width="1.3" height="1.3" fill="#222"/><rect x="22.91" y="92.65" width="1.3" height="1.3" fill="#222"/><rect x="24.88" y="78.85" width="1.3" height="1.3" fill="#222"/><rect x="24.88" y="92.65" width="1.3" height="1.3" fill="#222"/><rect x="26.85" y="78.85" width="1.3" height="1.3" fill="#222"/><rect x="26.85" y="92.65" width="1.3" height="1.3" fill="#222"/><rect x="13.05" y="80.82" width="1.3" height="1.3" fill="#222"/><rect x="26.85" y="80.82" width="1.3" height="1.3" fill="#222"/><rect x="13.05" y="82.79" width="1.3" height="1.3" fill="#222"/><rect x="26.85" y="82.79" width="1.3" height="1.3" fill="#222"/><rect x="13.05" y="84.76" width="1.3" height="1.3" fill="#222"/><rect x="26.85" y="84.76" width="1.3" height="1.3" fill="#222"/><rect x="13.05" y="86.74" width="1.3" height="1.3" fill="#222"/><rect x="26.85" y="86.74" width="1.3" height="1.3" fill="#222"/><rect x="13.05" y="88.71" width="1.3" height="1.3" fill="#222"/><rect x="26.85" y="88.71" width="1.3" height="1.3" fill="#222"/><rect x="13.05" y="90.68" width="1.3" height="1.3" fill="#222"/><rect x="26.85" y="90.68" width="1.3" height="1.3" fill="#222"/><circle cx="22.4" cy="84.6" r="2.9" fill="#111"/><path d="M16.2 87H19.6C19.8 89 20.8 89.8 22.3 90V92.2H16.2Z" fill="#111"/><rect x="52.20" y="78.85" width="1.3" height="1.3" fill="#222"/><rect x="52.20" y="92.65" width="1.3" height="1.3" fill="#222"/><rect x="54.17" y="78.85" width="1.3" height="1.3" fill="#222"/><rect x="54.17" y="92.65" width="1.3" height="1.3" fill="#222"/><rect x="56.14" y="78.85" width="1.3" height="1.3" fill="#222"/><rect x="56.14" y="92.65" width="1.3" height="1.3" fill="#222"/><rect x="58.11" y="78.85" width="1.3" height="1.3" fill="#222"/><rect x="58.11" y="92.65" width="1.3" height="1.3" fill="#222"/><rect x="60.09" y="78.85" width="1.3" height="1.3" fill="#222"/><rect x="60.09" y="92.65" width="1.3" height="1.3" fill="#222"/><rect x="62.06" y="78.85" width="1.3" height="1.3" fill="#222"/><rect x="62.06" y="92.65" width="1.3" height="1.3" fill="#222"/><rect x="64.03" y="78.85" width="1.3" height="1.3" fill="#222"/><rect x="64.03" y="92.65" width="1.3" height="1.3" fill="#222"/><rect x="66.00" y="78.85" width="1.3" height="1.3" fill="#222"/><rect x="66.00" y="92.65" width="1.3" height="1.3" fill="#222"/><rect x="52.20" y="80.82" width="1.3" height="1.3" fill="#222"/><rect x="66.00" y="80.82" width="1.3" height="1.3" fill="#222"/><rect x="52.20" y="82.79" width="1.3" height="1.3" fill="#222"/><rect x="66.00" y="82.79" width="1.3" height="1.3" fill="#222"/><rect x="52.20" y="84.76" width="1.3" height="1.3" fill="#222"/><rect x="66.00" y="84.76" width="1.3" height="1.3" fill="#222"/><rect x="52.20" y="86.74" width="1.3" height="1.3" fill="#222"/><rect x="66.00" y="86.74" width="1.3" height="1.3" fill="#222"/><rect x="52.20" y="88.71" width="1.3" height="1.3" fill="#222"/><rect x="66.00" y="88.71" width="1.3" height="1.3" fill="#222"/><rect x="52.20" y="90.68" width="1.3" height="1.3" fill="#222"/><rect x="66.00" y="90.68" width="1.3" height="1.3" fill="#222"/><path d="M56.5 81.5H65.5L63.5 84.3H54.5Z M56.5 85.5H65.5L63.5 88.3H54.5Z M56.5 89.5H65.5L63.5 92.3H54.5Z" fill="#222"/><rect x="92.20" y="78.85" width="1.3" height="1.3" fill="#c8c8c8"/><rect x="92.20" y="92.65" width="1.3" height="1.3" fill="#c8c8c8"/><rect x="94.17" y="78.85" width="1.3" height="1.3" fill="#c8c8c8"/><rect x="94.17" y="92.65" width="1.3" height="1.3" fill="#c8c8c8"/><rect x="96.14" y="78.85" width="1.3" height="1.3" fill="#c8c8c8"/><rect x="96.14" y="92.65" width="1.3" height="1.3" fill="#c8c8c8"/><rect x="98.11" y="78.85" width="1.3" height="1.3" fill="#c8c8c8"/><rect x="98.11" y="92.65" width="1.3" height="1.3" fill="#c8c8c8"/><rect x="100.09" y="78.85" width="1.3" height="1.3" fill="#c8c8c8"/><rect x="100.09" y="92.65" width="1.3" height="1.3" fill="#c8c8c8"/><rect x="102.06" y="78.85" width="1.3" height="1.3" fill="#c8c8c8"/><rect x="102.06" y="92.65" width="1.3" height="1.3" fill="#c8c8c8"/><rect x="104.03" y="78.85" width="1.3" height="1.3" fill="#c8c8c8"/><rect x="104.03" y="92.65" width="1.3" height="1.3" fill="#c8c8c8"/><rect x="106.00" y="78.85" width="1.3" height="1.3" fill="#c8c8c8"/><rect x="106.00" y="92.65" width="1.3" height="1.3" fill="#c8c8c8"/><rect x="92.20" y="80.82" width="1.3" height="1.3" fill="#c8c8c8"/><rect x="106.00" y="80.82" width="1.3" height="1.3" fill="#c8c8c8"/><rect x="92.20" y="82.79" width="1.3" height="1.3" fill="#c8c8c8"/><rect x="106.00" y="82.79" width="1.3" height="1.3" fill="#c8c8c8"/><rect x="92.20" y="84.76" width="1.3" height="1.3" fill="#c8c8c8"/><rect x="106.00" y="84.76" width="1.3" height="1.3" fill="#c8c8c8"/><rect x="92.20" y="86.74" width="1.3" height="1.3" fill="#c8c8c8"/><rect x="106.00" y="86.74" width="1.3" height="1.3" fill="#c8c8c8"/><rect x="92.20" y="88.71" width="1.3" height="1.3" fill="#c8c8c8"/><rect x="106.00" y="88.71" width="1.3" height="1.3" fill="#c8c8c8"/><rect x="92.20" y="90.68" width="1.3" height="1.3" fill="#c8c8c8"/><rect x="106.00" y="90.68" width="1.3" height="1.3" fill="#c8c8c8"/><circle cx="101.6" cy="84.6" r="2.9" fill="#c4c4c4"/><path d="M95.4 87H98.8C99 89 100 89.8 101.5 90V92.2H95.4Z" fill="#c4c4c4"/><rect x="131.85" y="81.95" width="1.3" height="1.3" fill="#111"/><rect x="131.85" y="92.55" width="1.3" height="1.3" fill="#111"/><rect x="133.97" y="81.95" width="1.3" height="1.3" fill="#111"/><rect x="133.97" y="92.55" width="1.3" height="1.3" fill="#111"/><rect x="136.09" y="81.95" width="1.3" height="1.3" fill="#111"/><rect x="136.09" y="92.55" width="1.3" height="1.3" fill="#111"/><rect x="138.21" y="81.95" width="1.3" height="1.3" fill="#111"/><rect x="138.21" y="92.55" width="1.3" height="1.3" fill="#111"/><rect x="140.33" y="81.95" width="1.3" height="1.3" fill="#111"/><rect x="140.33" y="92.55" width="1.3" height="1.3" fill="#111"/><rect x="142.45" y="81.95" width="1.3" height="1.3" fill="#111"/><rect x="142.45" y="92.55" width="1.3" height="1.3" fill="#111"/><rect x="131.85" y="84.07" width="1.3" height="1.3" fill="#111"/><rect x="142.45" y="84.07" width="1.3" height="1.3" fill="#111"/><rect x="131.85" y="86.19" width="1.3" height="1.3" fill="#111"/><rect x="142.45" y="86.19" width="1.3" height="1.3" fill="#111"/><rect x="131.85" y="88.31" width="1.3" height="1.3" fill="#111"/><rect x="142.45" y="88.31" width="1.3" height="1.3" fill="#111"/><rect x="131.85" y="90.43" width="1.3" height="1.3" fill="#111"/><rect x="142.45" y="90.43" width="1.3" height="1.3" fill="#111"/><rect x="141" y="80" width="5" height="4.6" fill="#111"/><rect x="186.8" y="80" width="4.4" height="7.8" fill="#b8b8b8"/><rect x="176" y="90.4" width="10" height="4.5" fill="#8e8e8e"/><path d="M184.4 81.6A5 5 0 0 0 179.6 86.6" fill="none" stroke="#86c177" stroke-width="1.6"/><path d="M177.3 85.4L179.6 88.6L182 85.4Z" fill="#86c177"/><rect x="215.8" y="80" width="4.4" height="7.8" fill="#b8b8b8"/><rect x="221" y="90.4" width="10" height="4.5" fill="#8e8e8e"/><path d="M222.6 81.6A5 5 0 0 1 227.4 86.6" fill="none" stroke="#86c177" stroke-width="1.6"/><path d="M225 85.4L227.4 88.6L229.7 85.4Z" fill="#86c177"/><rect x="458" y="80.8" width="5" height="1.2" fill="#a8a8a8"/><rect x="458" y="84.5" width="5" height="1.2" fill="#a8a8a8"/><rect x="458" y="88.2" width="5" height="1.2" fill="#a8a8a8"/><rect x="458" y="92" width="12" height="1.6" fill="#8a8a8a"/><rect x="466.9" y="80.5" width="1.4" height="7" fill="#8fc383"/><path d="M465 87H470L467.6 90Z" fill="#8fc383"/><path d="M259 80.5L268 86.5L259 92.5Z" fill="#222"/><path d="M284 80.5L275 86.5L284 92.5Z" fill="#444"/><path d="M297 80.5L310 86.5L297 92.5Z" fill="#111"/><rect x="325" y="72" width="1" height="32" fill="#ccc"/><rect x="339" y="80" width="12" height="1.8" fill="#111"/><rect x="339" y="84.5" width="5" height="1.3" fill="#333"/><rect x="339" y="88" width="5" height="1.3" fill="#333"/><rect x="339" y="91.5" width="5" height="1.3" fill="#333"/><rect x="346.5" y="84" width="1.4" height="9" fill="#222"/><rect x="378" y="80.5" width="5" height="1.3" fill="#333"/><rect x="378" y="85" width="12" height="1.8" fill="#111"/><rect x="378" y="89" width="5" height="1.3" fill="#333"/><rect x="385.5" y="88" width="1.4" height="5" fill="#222"/><rect x="418" y="80.5" width="5" height="1.3" fill="#333"/><rect x="418" y="84" width="5" height="1.3" fill="#333"/><rect x="418" y="88" width="12" height="1.8" fill="#111"/><rect x="425.5" y="80.5" width="1.4" height="6" fill="#222"/><rect x="881.3" y="86.8" width="9.4" height="7" rx=".6" fill="#111"/><path d="M888.8 87V84.2A2.5 2.5 0 0 1 893.6 84.2V85.4" fill="none" stroke="#111" stroke-width="1.9"/><g transform="translate(1102 71.5)"><path d="M12 9H22.5V14.5" fill="none" stroke="#111" stroke-width="1.6"/><path d="M12 12H20V14.5" fill="none" stroke="#111" stroke-width="1.4"/><rect x="12" y="15" width="5" height="1.4" fill="#111"/><path d="M12 20.5H13.6M15.4 20.5H17M18.8 20.5H21" stroke="#111" stroke-width="1.8"/><path d="M20.5 18L24 20.5L20.5 23Z" fill="#111"/></g><g transform="translate(1141.5 71.5)"><path d="M12 9H17A5.5 5.5 0 0 1 22.5 14.5" fill="none" stroke="#111" stroke-width="1.6"/><path d="M12 12H16.5A3.5 3.5 0 0 1 20 15.5" fill="none" stroke="#111" stroke-width="1.4"/><rect x="12" y="15" width="3" height="1.4" fill="#111"/><path d="M12 20.5H13.6M15.4 20.5H17M18.8 20.5H21" stroke="#111" stroke-width="1.8"/><path d="M20.5 18L24 20.5L20.5 23Z" fill="#111"/></g><g transform="translate(1181 71.5)"><rect x="12" y="8.5" width="10" height="1.6" fill="#111"/><rect x="12" y="11.5" width="10" height="1.6" fill="#245"/><rect x="12" y="14.5" width="10" height="1.6" fill="#111"/><path d="M12 20.5H13.6M15.4 20.5H17M18.8 20.5H21" stroke="#111" stroke-width="1.8"/></g><path d="M7.8 116.9L18.2 121.4L14.4 123.1L17.6 126.8L15.4 128.9L12.3 125.2L10.2 128.6Z" fill="none" stroke="#111" stroke-width="2" stroke-linejoin="round"/><rect x="7.4" y="148.4" width="3.6" height="3.6" fill="#fff" stroke="#111" stroke-width="1.5"/><path d="M11.5 148.2L17.6 146.6M8.2 152.5L6.6 159.2" stroke="#111" stroke-width="1"/><path d="M12.2 155.2L17.7 157.5L12.2 160Z" fill="#111"/><circle cx="10.4" cy="182.2" r="3.7" fill="#fff" stroke="#111" stroke-width="1.6"/><rect x="11.6" y="183.2" width="6.6" height="6.6" fill="#fff" fill-opacity=".8" stroke="#111" stroke-width="1.6"/><rect x="6.9" y="211.8" width="11.2" height="11.2" rx="1.6" fill="#e8348a" stroke="#111" stroke-width="1.6"/><circle cx="12.4" cy="247.7" r="5.4" fill="#e660a8" stroke="#111" stroke-width="1.6"/><path d="M10 273.6L14.6 276.4L13.5 281.5H7.7L6.1 276.6Z" fill="#e68dc0" stroke="#111" stroke-width="1.4" stroke-linejoin="round"/><path d="M15.4 276.6L16.5 279.2L19.2 279.4L17.2 281.2L17.9 283.9L15.4 282.4L12.9 283.9L13.6 281.2L11.6 279.4L14.3 279.2Z" fill="#f6dceb" stroke="#111" stroke-width="1.2" stroke-linejoin="round"/><path d="M12.4 302.3L18.5 305.8V312.8L12.4 316.2L6.3 312.8V305.8Z" fill="#e8348a" stroke="#111" stroke-width="1.6" stroke-linejoin="round"/><path d="M12.4 304L16.8 306.5L12.4 309L8 306.5Z" fill="#fbe0ee"/><path d="M13.2 310L16.9 307.8V312.2L13.2 314.4Z" fill="#f07ab8"/><path d="M6.5 306L12.4 309.4L18.3 306M12.4 309.4V316" fill="none" stroke="#111" stroke-width="1.2"/><path d="M12.4 340.6A1.2 1.2 0 0 1 13.6 341.8A2.4 2.4 0 0 1 11.2 344.2A3.6 3.6 0 0 1 7.6 340.6A4.8 4.8 0 0 1 12.4 335.8A6 6 0 0 1 18.4 341.8A5 5 0 0 1 16.6 345.6" fill="none" stroke="#111" stroke-width="1.9" stroke-linecap="round"/><circle cx="6.8" cy="367.4" r="1.6" fill="#4b9a3c"/><rect x="5.4" y="373.3" width="2.8" height="2.8" fill="#4b9a3c"/><path d="M6.8 368.5V373.5" stroke="#4b9a3c" stroke-width="1"/><path d="M8.2 370.5A8 8 0 0 1 15.6 367" fill="none" stroke="#333" stroke-width=".9"/><path d="M11 376.8L13 372L17 370L19.4 372.4L17.6 376.4L12.6 378.6L10 380.6Z" fill="#111"/><circle cx="14.8" cy="374.2" r=".9" fill="#fff"/><path d="M9.5 396.7C5.5 398 6 401 8.5 402.5C10.5 403.5 9.5 406 6.5 407" fill="none" stroke="#4b9a3c" stroke-width="1.3"/><path d="M17 398L19.5 400.4L12 408L9.5 405.6Z" fill="#111"/><path d="M9.3 406L11.7 408.2L8.3 410Z" fill="#4b9a3c"/><path d="M9.3 428.3C12 429.4 10.5 431.2 8 433.3C6 435 9 434.6 9.8 434" fill="none" stroke="#4b9a3c" stroke-width="1.3"/><path d="M19.3 428.5L13.5 435.5L11.8 434.1Z" fill="#111"/><path d="M12 434L13.6 435.5L12 437L10.7 435.6Z" fill="#111"/><path d="M10.5 436.2L12 437.2C10 440 8 441 6 441.3C7 439.6 8.5 437.6 10.5 436.2Z" fill="#4b9a3c"/><path d="M6 473L10.1 461.5H13.2L17.3 473H14L13.2 470.4H10L9.2 473ZM10.7 467.8H12.5L11.6 464.8Z" fill="#111"/><rect x="18.4" y="458" width="1.5" height="15" fill="#4b9a3c"/><defs><linearGradient id="gr" x1="0" y1="0" x2="1" y2="1"><stop offset="0" stop-color="#3b8ad8"/><stop offset="1" stop-color="#0b1c30"/></linearGradient><radialGradient id="mr"><stop offset="0" stop-color="#fff"/><stop offset="1" stop-color="#8cc0e8"/></radialGradient></defs><rect x="5.7" y="491.6" width="13.6" height="14.6" rx="1.5" fill="#fff" stroke="#111" stroke-width="1.2"/><rect x="7.2" y="493.1" width="10.6" height="11.6" fill="url(#gr)"/><rect x="5.7" y="522.8" width="13.6" height="14.6" fill="url(#mr)" stroke="#111" stroke-width="1.4"/><path d="M12.5 530.1C9 527.5 9.5 524.5 13 523M12.5 530.1C15.2 526.6 18 527.2 19.3 530.5M12.5 530.1C16 532.7 15.5 535.7 12 537.3M12.5 530.1C9.8 533.6 7 533 5.7 529.7" fill="none" stroke="#14294a" stroke-width="1.5"/><path d="M8.3 554.6C7.2 556.3 6.6 557.4 6.6 558.2A1.7 1.7 0 0 0 10 558.2C10 557.4 9.4 556.3 8.3 554.6Z" fill="#3c8ede"/><path d="M16.5 557.5L8.8 565.2A1.2 1.2 0 0 0 10.5 566.9L18.2 559.2" fill="#fff" stroke="#111" stroke-width="1.3"/><path d="M14.8 557.2L18.6 561L19.2 560.3L18.3 559.4L19.8 557.9A1.6 1.6 0 0 0 17.6 555.7L16.1 557.2L15.5 556.5Z" fill="#111"/><path d="M15.3 584.2L20 589.3L14.6 594.7L9.3 589.4Z" fill="#111"/><path d="M14.6 586.7L17.3 589.3L11.5 589.3Z" fill="#fff"/><path d="M14.2 584.6V586.8" stroke="#111" stroke-width="1.2"/><path d="M7.7 592.5C6.6 594.2 6 595.3 6 596.1A1.7 1.7 0 0 0 9.4 596.1C9.4 595.3 8.8 594.2 7.7 592.5Z" fill="#3c8ede"/><path d="M5.8 631.3V626C7.5 625 8.5 623.5 9.5 621.5C11 619 14.5 618 16.8 619.3C18.2 620 18.5 621 18.2 621.8C17 621 15 621 14.5 622.5C14 624 15.5 625.5 17.5 624.8L18.8 624.5V631.3Z" fill="#111"/><circle cx="7" cy="651" r=".8" fill="#777"/><circle cx="8.5" cy="649.5" r=".7" fill="#999"/><circle cx="10.5" cy="650" r=".7" fill="#aaa"/><circle cx="7.3" cy="653.5" r=".8" fill="#777"/><circle cx="9.5" cy="652.3" r=".7" fill="#999"/><circle cx="7.7" cy="656" r=".9" fill="#777"/><rect x="13.2" y="649" width="3.2" height="1.8" rx=".8" fill="#111"/><path d="M12.6 651.5H17L17.3 653.3H12.3Z" fill="#111"/><rect x="10.8" y="654" width="8.2" height="8" rx="1" fill="#111"/><path d="M15.2 679.3L19 683L15.4 686.6L11.7 682.9Z" fill="#111"/><path d="M11.2 683.4L14.9 687.1L12.5 689.5L8.8 685.8Z" fill="#888"/><rect x="6" y="690.8" width="2.8" height="1.5" fill="#111"/><rect x="13.3" y="690.8" width="5.8" height="1.5" fill="#111"/><path d="M5.8 711.5C9 711 10 713 10.5 715C11 718 12.5 718.5 14 718.5" fill="none" stroke="#111" stroke-width="1.8"/><path d="M14 715L19 718.8L14.5 722.6Z" fill="#111"/><path d="M8.8 749.8L12.3 742.5L15.8 749.8" fill="none" stroke="#111" stroke-width="1.7"/><circle cx="12.3" cy="744.3" r="2" fill="#f6f5f4" stroke="#111" stroke-width="1.5"/><rect x="33.5" y="117.2" width="9.8" height="7.3" rx=".6" fill="#111"/><path d="M40.6 117.4V114.4A2.6 2.6 0 0 1 45.6 114.4V116" fill="none" stroke="#111" stroke-width="1.9"/><path d="M1037.5 793V801L1032.5 797Z" fill="#8a8a8a"/><path d="M1100.5 793V801L1105.5 797Z" fill="#8a8a8a"/><rect x="1120" y="786" width="1" height="13" fill="#dcdcdc"/><circle cx="324.6" cy="799.8" r="4" fill="none" stroke="#111" stroke-width="1.8"/><path d="M324.6 793L326.2 796H323Z M319 795.5L321.8 796.6L320.6 798.8Z M330.2 795.5L327.4 796.6L328.6 798.8Z" fill="#111"/></svg>
<div class="a" style="left:255px;top:68px;width:197px;height:51px;border-radius:5px;background:rgba(40,40,40,.95)"></div><div class="a" style="left:267px;top:80px;font-size:11.5px;font-weight:bold;color:#fff">Copy</div><div class="a" style="left:267px;top:93px;font-size:11.8px;color:#fff;white-space:nowrap">Copy selection to clipboard (⌘C)</div>
</div></body></html>
